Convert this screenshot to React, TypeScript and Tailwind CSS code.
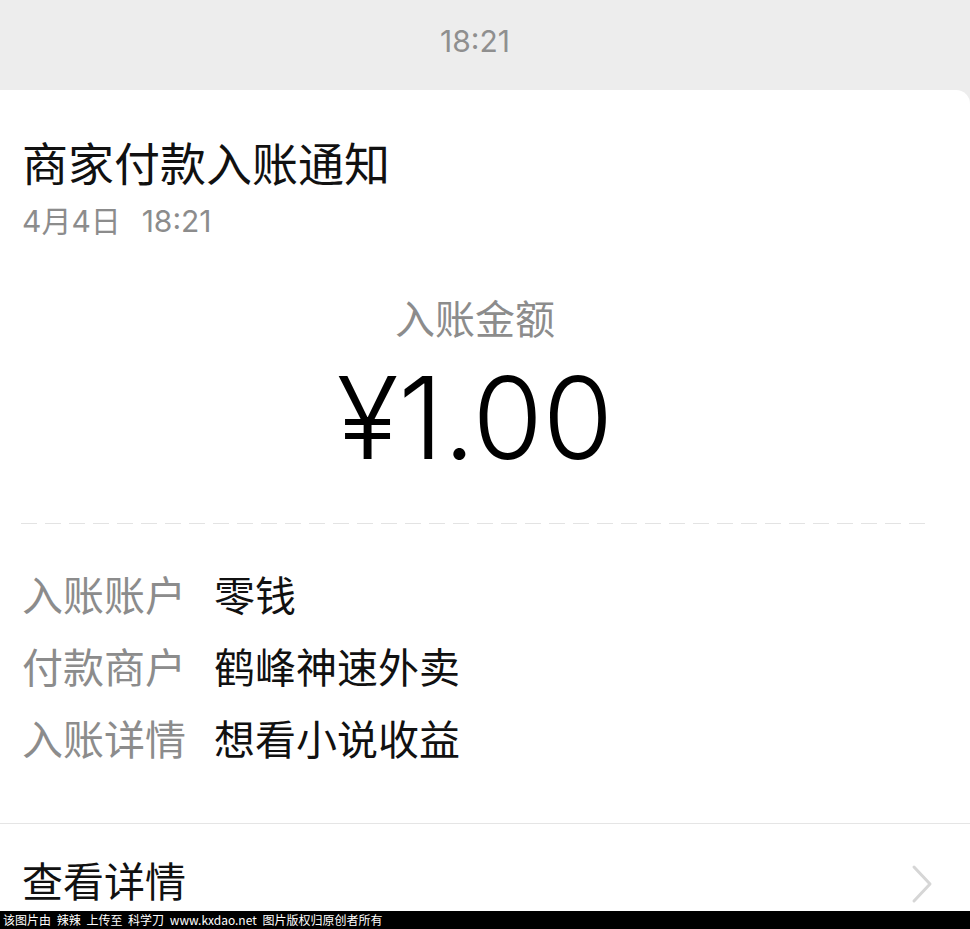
const ROWS = [
    { label: '入账账户', value: '零钱' },
    { label: '付款商户', value: '鹤峰神速外卖' },
    { label: '入账详情', value: '想看小说收益' },
];

export default function App() {
    return (
        <div className="relative w-[970px] h-[929px] bg-[#ededed] overflow-hidden flex flex-col font-['Inter','Noto_Sans_CJK_SC',sans-serif]">
            {/* Time stamp */}
            <div className="h-[90px] shrink-0 flex items-center justify-center pb-[8px] pr-[20px] text-[30px] text-[#8f8f8f]">
                18:21
            </div>

            {/* Card */}
            <div className="flex-1 bg-white rounded-tr-[14px] flex flex-col">
                {/* Header */}
                <div className="px-[22px] pt-[46px]">
                    <h1 className="text-[46px] leading-[56px] text-[#111]">商家付款入账通知</h1>
                    <p className="text-[30px] leading-[40px] text-[#8c8c8c] mt-[9px] [word-spacing:2px]">4月4日&nbsp;&nbsp;18:21</p>
                </div>

                {/* Amount */}
                <div className="flex flex-col items-center mt-[54px] pr-[20px]">
                    <span className="text-[40px] leading-[50px] text-[#8c8c8c]">入账金额</span>
                    <span className="text-[114px] leading-[130px] font-light text-black mt-[8px]">¥1.00</span>
                </div>

                {/* Dashed divider */}
                <div className="ml-[21px] mr-[42px] mt-[40px] h-px bg-[linear-gradient(to_right,#e3e3e3_16px,transparent_16px)] bg-[length:24px_1px]" />

                {/* Detail rows */}
                <div className="px-[22px] pt-[37px] flex flex-col">
                    {ROWS.map(row => (
                        <div key={row.label} className="flex items-center h-[72px] text-[41px]">
                            <span className="w-[192px] shrink-0 text-[#8c8c8c]">{row.label}</span>
                            <span className="text-[#111]">{row.value}</span>
                        </div>
                    ))}
                </div>

                {/* Footer link */}
                <div className="mt-[46px] border-t border-[#e5e5e5] flex items-start justify-between pl-[22px] pr-[37px] pt-[33px]">
                    <span className="text-[41px] leading-[50px] text-[#111]">查看详情</span>
                    <svg width="22" height="40" viewBox="0 0 22 40" className="mt-[7px]" fill="none">
                        <path d="M3 3 L19 20 L3 37" stroke="#d6d6d6" strokeWidth="3" strokeLinecap="round" strokeLinejoin="round" />
                    </svg>
                </div>
            </div>

            {/* Watermark bar */}
            <div className="absolute left-0 right-0 bottom-0 h-[18px] bg-black text-white text-[12px] leading-[18px] pl-[3px] whitespace-nowrap font-['Noto_Sans_CJK_SC',sans-serif] [word-spacing:3px]">
                该图片由 辣辣 上传至 科学刀 www.kxdao.net 图片版权归原创者所有
            </div>
        </div>
    );
}
